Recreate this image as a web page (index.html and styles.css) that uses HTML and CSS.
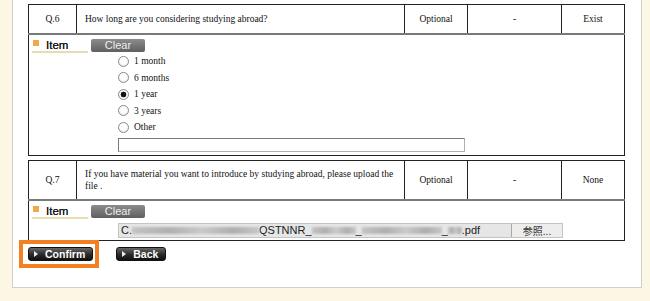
FILE: index.html
```html
<!DOCTYPE html>
<html>
<head>
	<title>Questionnaire</title>
	<meta charset=utf-8>
	<link rel="stylesheet" href="styles.css">
</head>
<body>
	<div class="panel">
		<!-- Q.6 -->
		<table class="qtable">
			<colgroup>
				<col class="c-no"><col class="c-text"><col class="c-req"><col class="c-limit"><col class="c-ans">
			</colgroup>
			<tr class="qhead">
				<td>Q.6</td>
				<td class="qtext">How long are you considering studying abroad?</td>
				<td>Optional</td>
				<td>-</td>
				<td>Exist</td>
			</tr>
			<tr>
				<td colspan="5" class="qbody">
					<div class="itemhead">
						<span class="itemlabel">Item</span>
						<span class="btn-clear">Clear</span>
					</div>
					<div class="answers">
						<label class="opt"><input type="radio" name="q6">1 month</label>
						<label class="opt"><input type="radio" name="q6">6 months</label>
						<label class="opt"><input type="radio" name="q6" checked>1 year</label>
						<label class="opt"><input type="radio" name="q6">3 years</label>
						<label class="opt"><input type="radio" name="q6">Other</label>
						<input type="text" class="other">
					</div>
				</td>
			</tr>
		</table>

		<!-- Q.7 -->
		<table class="qtable">
			<colgroup>
				<col class="c-no"><col class="c-text"><col class="c-req"><col class="c-limit"><col class="c-ans">
			</colgroup>
			<tr class="qhead qhead-2line">
				<td>Q.7</td>
				<td class="qtext">If you have material you want to introduce by studying abroad, please upload the file .</td>
				<td>Optional</td>
				<td>-</td>
				<td>None</td>
			</tr>
			<tr>
				<td colspan="5" class="qbody qbody-file">
					<div class="itemhead">
						<span class="itemlabel">Item</span>
						<span class="btn-clear">Clear</span>
					</div>
					<div class="answers">
						<div class="filebox">
							<span class="filepath">C.<span class="smudge" style="width:127px"></span>QSTNNR_<span class="smudge" style="width:44px"></span>_<span class="smudge" style="width:80px"></span>_<span class="smudge" style="width:14px"></span>.pdf</span>
							<span class="browse">参照...</span>
						</div>
					</div>
				</td>
			</tr>
		</table>

		<div class="actions">
			<span class="hl"><span class="btn-dark">Confirm</span></span>
			<span class="btn-dark">Back</span>
		</div>
	</div>
</body>
</html>
```

FILE: styles.css
```css
body{
	margin:0;
	background:#fcf6e5;
	font-family:"Liberation Serif", serif;
	color:#111;
}
.panel{
	margin:0 8px 9px 12px;
	background:#fff;
	border:1px solid #cfcfcf;
	border-top:none;
	padding:4px 0 26px 15px;
	width:613px;
}
.qtable{
	border-collapse:collapse;
	table-layout:fixed;
	width:597px;
	border:1px solid #222;
	font-size:9.5px;
	margin-bottom:4px;
}
.c-no{width:48px;}
.c-text{width:328px;}
.c-req{width:63px;}
.c-limit{width:94px;}
.c-ans{width:63px;}
.qhead td{
	border:1px solid #222;
	border-bottom:2px solid #7a7a7a;
	padding:8px 6px;
	line-height:12px;
	text-align:center;
}
.qhead-2line td{
	padding-top:7px;
	padding-bottom:7px;
}
.qhead td.qtext{
	text-align:left;
	padding-left:8px;
}
.qbody{
	padding:4px 3px 3px 3px;
}
.qbody-file{
	padding-bottom:2px;
}
.itemhead{
	display:flex;
	align-items:flex-start;
	height:14px;
	font-family:"Liberation Sans", Arial, sans-serif;
}
.itemlabel{
	display:block;
	width:42px;
	height:12px;
	padding-left:14px;
	border-bottom:2px solid #e7dcb2;
	font-size:11.5px;
	line-height:12px;
	color:#1a1a1a;
	text-shadow:0 0 0.2px #1a1a1a;
	position:relative;
}
.itemlabel::before{
	content:"";
	position:absolute;
	left:1px;
	top:1px;
	width:6px;
	height:6px;
	background:#f0a848;
}
.btn-clear{
	display:block;
	margin-left:3px;
	width:54px;
	height:13px;
	border-radius:2px;
	background:linear-gradient(#8c8c8c, #5f5f5f);
	color:#eee;
	font-size:11px;
	line-height:13px;
	text-align:center;
}
.answers{
	margin-left:86px;
}
.opt{
	display:flex;
	align-items:center;
	height:16.5px;
}
.opt input{
	appearance:none;
	-webkit-appearance:none;
	width:11px;
	height:11px;
	margin:0 5px 0 0;
	border:1px solid #8a8a8a;
	border-radius:50%;
	background:radial-gradient(circle at 50% 40%, #fff 40%, #e2e2e2);
}
.opt input:checked{
	background:radial-gradient(circle, #111 0 2.6px, #fff 3.2px, #e2e2e2);
}
.other{
	display:block;
	box-sizing:border-box;
	width:347px;
	height:14px;
	margin:2px 0 0 0;
	padding:0;
	border:1px solid #8c8c8c;
	border-color:#7a7a7a #b0b0b0 #b0b0b0 #7a7a7a;
}
.filebox{
	display:flex;
	box-sizing:border-box;
	width:445px;
	height:15px;
	margin-top:4px;
	border:1px solid #c4c4c4;
	background:#e6e6e6;
	font-family:"Liberation Sans", Arial, sans-serif;
	font-size:11px;
	line-height:13px;
	color:#222;
}
.filepath{
	flex:1;
	padding-left:2px;
	white-space:nowrap;
	overflow:hidden;
}
.smudge{
	display:inline-block;
	height:7px;
	vertical-align:0;
	background:linear-gradient(90deg, #c4c4c4, #b0b0b0 30%, #cacaca 55%, #aeaeae 80%, #c8c8c8);
	filter:blur(1.2px);
}
.browse{
	width:50px;
	border-left:1px solid #a8a8a8;
	background:#ededed;
	text-align:center;
	font-family:"Noto Sans CJK JP", sans-serif;
	font-size:10px;
	color:#333;
}
.actions{
	display:flex;
	gap:23px;
	margin-top:6px;
}
.hl{
	position:relative;
	display:block;
}
.hl::after{
	content:"";
	position:absolute;
	left:-9px;
	right:-6px;
	top:-7px;
	bottom:-7px;
	border:4px solid #f27f22;
}
.btn-dark{
	display:block;
	box-sizing:border-box;
	height:14px;
	padding:0 7px 0 16px;
	border:1px solid #111;
	border-radius:3px;
	background:linear-gradient(#666, #2a2a2a 55%, #111);
	color:#fff;
	font-family:"Liberation Sans", Arial, sans-serif;
	font-size:10.5px;
	font-weight:bold;
	line-height:12px;
	position:relative;
}
.btn-dark::before{
	content:"";
	position:absolute;
	left:5px;
	top:3px;
	border-left:4px solid #eee;
	border-top:3px solid transparent;
	border-bottom:3px solid transparent;
}
```
